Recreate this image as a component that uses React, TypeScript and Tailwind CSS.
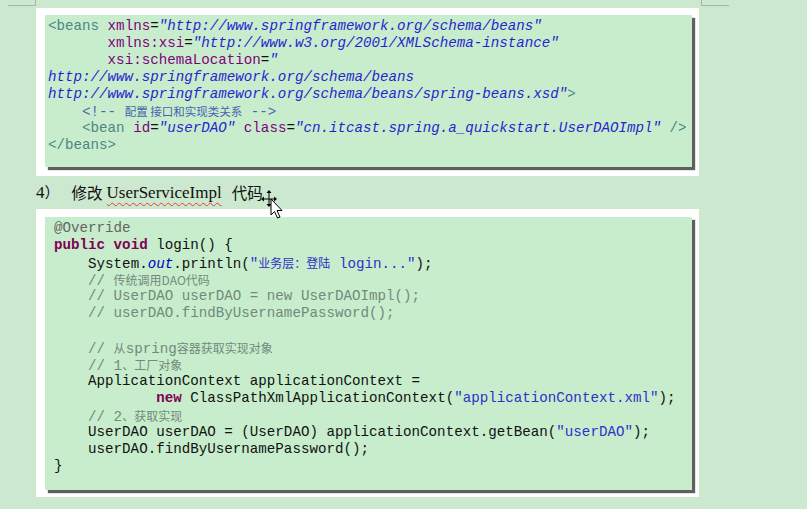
import React from "react";

const TAG = "text-[#4f8585]";
const ATTR = "text-[#7f007f]";
const VAL = "text-[#2a1fd0] italic";
const XCMT = "text-[#4a64b0]";
const KW = "text-[#7f0055] font-bold";
const ANN = "text-[#646464]";
const CMT = "text-[#728a7b]";
const STR = "text-[#3030c8]";
const CJK = "font-['Noto_Sans_CJK_SC',sans-serif]";

const Line = ({ children }: { children?: React.ReactNode }) => (
  <div className="h-[17px] whitespace-pre">{children}</div>
);

const Zh = ({ children, size = "text-[12px]" }: { children: React.ReactNode; size?: string }) => (
  <span className={`${CJK} ${size}`}>{children}</span>
);

const Cursor = () => (
  <svg className="absolute left-[261px] top-[190px]" width="26" height="30" viewBox="0 0 26 30">
    {/* move cursor */}
    <g fill="#000">
      <rect x="7.5" y="3" width="1" height="11" />
      <rect x="2" y="8.5" width="12" height="1" />
      <path d="M8 0 L10.5 3 L5.5 3 Z" />
      <path d="M8 17 L10.5 14 L5.5 14 Z" />
      <path d="M0 9 L3 6.5 L3 11.5 Z" />
      <path d="M16 9 L13 6.5 L13 11.5 Z" />
    </g>
    {/* arrow pointer */}
    <path
      d="M10 9 L10 25 L13.5 21.5 L16.5 28 L19 27 L16 20.5 L21 20.5 Z"
      fill="#fff"
      stroke="#000"
      strokeWidth="1"
      strokeLinejoin="miter"
    />
  </svg>
);

export default function App() {
  return (
    <div className="relative w-[807px] h-[509px] overflow-hidden bg-[#cce8cf] pl-[36px] pt-[8px] text-[#111]">
      {/* page corner marks */}
      <div className="absolute left-[8px] top-[5px] w-[28px] h-px bg-[#a8b4aa]" />
      <div className="absolute left-[35px] top-0 w-px h-[6px] bg-[#a8b4aa]" />
      <div className="absolute left-[701px] top-[5px] w-[28px] h-px bg-[#a8b4aa]" />
      <div className="absolute left-[701px] top-0 w-px h-[6px] bg-[#a8b4aa]" />

      {/* XML snippet */}
      <div className="w-[663px] bg-white pt-[7px] pl-[9px] pr-[7px] pb-[9px]">
        <div className="h-[152px] bg-[#c7edcc] shadow-[3px_3px_1px_#5f5f5f] pl-[3px] pt-[3px] font-['Liberation_Mono',monospace] text-[14.2px] leading-[17px]">
          <Line>
            <span className={TAG}>&lt;beans</span> <span className={ATTR}>xmlns</span>=
            <span className={VAL}>"http://www.springframework.org/schema/beans"</span>
          </Line>
          <Line>
            {"       "}
            <span className={ATTR}>xmlns:xsi</span>=
            <span className={VAL}>"http://www.w3.org/2001/XMLSchema-instance"</span>
          </Line>
          <Line>
            {"       "}
            <span className={ATTR}>xsi:schemaLocation</span>=<span className={VAL}>"</span>
          </Line>
          <Line>
            <span className={VAL}>http://www.springframework.org/schema/beans</span>
          </Line>
          <Line>
            <span className={VAL}>http://www.springframework.org/schema/beans/spring-beans.xsd"</span>
            <span className={TAG}>&gt;</span>
          </Line>
          <Line>
            {"    "}
            <span className={XCMT}>
              &lt;!-- <Zh size="text-[11.5px]">配置 接口和实现类关系</Zh> --&gt;
            </span>
          </Line>
          <Line>
            {"    "}
            <span className={TAG}>&lt;bean</span> <span className={ATTR}>id</span>=
            <span className={VAL}>"userDAO"</span> <span className={ATTR}>class</span>=
            <span className={VAL}>"cn.itcast.spring.a_quickstart.UserDAOImpl"</span>{" "}
            <span className={TAG}>/&gt;</span>
          </Line>
          <Line>
            <span className={TAG}>&lt;/beans&gt;</span>
          </Line>
        </div>
      </div>

      {/* step heading */}
      <div className="h-[33px] flex items-center text-[16px] text-[#111]">
        <span className="font-['Liberation_Serif',serif] text-[17px]">4</span>
        <span className={`${CJK} text-[15px]`}>）</span>
        <span className={`${CJK} text-[15.5px] ml-[12px]`}>修改</span>
        <span className="font-['Liberation_Serif',serif] text-[17px] ml-[4px] underline decoration-wavy decoration-[#e04040] decoration-1 underline-offset-[4px]">
          UserServiceImpl
        </span>
        <span className={`${CJK} text-[15.5px] ml-[10px]`}>代码</span>
      </div>
      <Cursor />

      {/* Java snippet */}
      <div className="w-[663px] bg-white pt-[8px] pl-[9px] pr-[7px] pb-[7px]">
        <div className="h-[273px] bg-[#c7edcc] shadow-[3px_3px_1px_#5f5f5f] pl-[9px] pt-[3px] font-['Liberation_Mono',monospace] text-[14.2px] leading-[17px]">
          <Line>
            <span className={ANN}>@Override</span>
          </Line>
          <Line>
            <span className={KW}>public</span> <span className={KW}>void</span> login() {"{"}
          </Line>
          <Line>
            {"    "}System.<span className="italic text-[#0000c0]">out</span>.println(
            <span className={STR}>
              "<Zh>业务层：登陆</Zh> login..."
            </span>
            );
          </Line>
          <Line>
            <span className={CMT}>
              {"    // "}
              <Zh>传统调用DAO代码</Zh>
            </span>
          </Line>
          <Line>
            <span className={CMT}>{"    // UserDAO userDAO = new UserDAOImpl();"}</span>
          </Line>
          <Line>
            <span className={CMT}>{"    // userDAO.findByUsernamePassword();"}</span>
          </Line>
          <Line />
          <Line>
            <span className={CMT}>
              {"    // "}
              <Zh>从</Zh>spring<Zh>容器获取实现对象</Zh>
            </span>
          </Line>
          <Line>
            <span className={CMT}>
              {"    // 1"}
              <Zh>、工厂对象</Zh>
            </span>
          </Line>
          <Line>{"    ApplicationContext applicationContext ="}</Line>
          <Line>
            {"            "}
            <span className={KW}>new</span> ClassPathXmlApplicationContext(
            <span className={STR}>"applicationContext.xml"</span>);
          </Line>
          <Line>
            <span className={CMT}>
              {"    // 2"}
              <Zh>、获取实现</Zh>
            </span>
          </Line>
          <Line>
            {"    UserDAO userDAO = (UserDAO) applicationContext.getBean("}
            <span className={STR}>"userDAO"</span>);
          </Line>
          <Line>{"    userDAO.findByUsernamePassword();"}</Line>
          <Line>{"}"}</Line>
        </div>
      </div>
    </div>
  );
}
